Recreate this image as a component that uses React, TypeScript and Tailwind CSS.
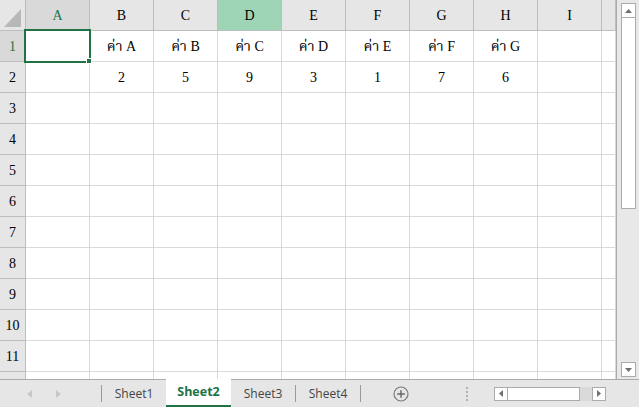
import React from "react";

const cols = ["A", "B", "C", "D", "E", "F", "G", "H", "I", ""];
const rowData: Record<number, string[]> = {
  1: ["", "ค่า A", "ค่า B", "ค่า C", "ค่า D", "ค่า E", "ค่า F", "ค่า G", "", ""],
  2: ["", "2", "5", "9", "3", "1", "7", "6", "", ""],
};
const rows = [1, 2, 3, 4, 5, 6, 7, 8, 9, 10, 11, 12];
const sheets = ["Sheet1", "Sheet2", "Sheet3", "Sheet4"];

const cellFont = { fontFamily: '"Liberation Serif", "Noto Serif Thai", "Noto Sans Thai", "DejaVu Serif", serif' };

function Corner() {
  return (
    <div className="border-r border-b border-[#bdbdbd] bg-[#e6e6e6] relative">
      <svg width="26" height="31" className="absolute left-0 top-0">
        <polygon points="4,27 21,27 21,9" fill="#b8b8b8" />
      </svg>
    </div>
  );
}

function Grid() {
  return (
    <div
      className="grid grid-cols-[26px_repeat(9,64px)_1fr] grid-rows-[repeat(13,31px)] text-[14px] text-black"
      style={cellFont}
    >
      <Corner />
      {cols.map((c, i) => (
        <div
          key={c + i}
          className={
            "flex items-center justify-center border-r border-b border-[#bdbdbd] " +
            (c === "D"
              ? "bg-[#9fd5b7]"
              : c === "A"
              ? "bg-[#d9d9d9] text-[#217346]"
              : "bg-[#e6e6e6]")
          }
        >
          {c}
        </div>
      ))}
      {rows.map((r) => (
        <React.Fragment key={r}>
          <div
            className={
              "flex items-center justify-center border-r border-b border-[#bdbdbd] " +
              (r === 1 ? "bg-[#d9d9d9] text-[#217346]" : "bg-[#e6e6e6]")
            }
          >
            {r}
          </div>
          {cols.map((c, i) => (
            <div
              key={r + "-" + i}
              className="flex items-center justify-center border-r border-b border-[#d9d9d9]"
            >
              {rowData[r]?.[i] ?? ""}
            </div>
          ))}
        </React.Fragment>
      ))}
    </div>
  );
}

function VScroll() {
  return (
    <div className="w-[22px] bg-[#e8e8e8] flex flex-col items-center pt-[3px] pb-[2px] pl-[1px]">
      <div className="w-[15px] h-[15px] bg-white border border-[#ababab] flex items-center justify-center">
        <svg width="7" height="4">
          <polygon points="0,4 7,4 3.5,0" fill="#6f6f6f" />
        </svg>
      </div>
      <div className="w-[15px] h-[191px] bg-white border border-[#ababab] border-t-0" />
      <div className="flex-1" />
      <div className="w-[15px] h-[15px] bg-white border border-[#ababab] flex items-center justify-center">
        <svg width="7" height="4">
          <polygon points="0,0 7,0 3.5,4" fill="#6f6f6f" />
        </svg>
      </div>
    </div>
  );
}

function TabBar() {
  return (
    <div
      className="h-[28px] border-t border-[#ababab] bg-[#e6e6e6] flex items-stretch text-[12px] text-[#444]"
      style={{ fontFamily: '"Open Sans", "Noto Sans", sans-serif' }}
    >
      <div className="w-[101px] flex items-center">
        <svg width="5" height="8" className="ml-[27px]">
          <polygon points="5,0 5,8 0,4" fill="#c6c6c6" />
        </svg>
        <svg width="5" height="8" className="ml-[24px]">
          <polygon points="0,0 0,8 5,4" fill="#c6c6c6" />
        </svg>
      </div>
      <div className="w-px bg-[#9a9a9a] my-[5px]" />
      {sheets.map((s, i) => {
        const active = s === "Sheet2";
        const sepAfter = i >= 2;
        return (
          <React.Fragment key={s}>
            {active ? (
              <div className="w-[65px] -mt-px bg-white border-b-2 border-[#217346] flex items-center justify-center font-bold text-[#217346] text-[12.5px]">
                {s}
              </div>
            ) : (
              <div className="w-[64px] flex items-center justify-center">{s}</div>
            )}
            {sepAfter && <div className="w-px bg-[#9a9a9a] my-[5px]" />}
          </React.Fragment>
        );
      })}
      <div className="w-[80px] flex items-center justify-center">
        <svg width="16" height="16" viewBox="0 0 16 16">
          <circle cx="8" cy="8" r="7" fill="none" stroke="#7a7a7a" strokeWidth="1.2" />
          <path d="M8 4.2v7.6M4.2 8h7.6" stroke="#666" strokeWidth="1.4" />
        </svg>
      </div>
      <div className="w-[50px] flex flex-col items-center justify-center gap-[2px] ml-[1px]">
        <span className="w-[2px] h-[2px] bg-[#b0b0b0]" />
        <span className="w-[2px] h-[2px] bg-[#b0b0b0]" />
        <span className="w-[2px] h-[2px] bg-[#b0b0b0]" />
        <span className="w-[2px] h-[2px] bg-[#b0b0b0]" />
      </div>
      <div className="flex items-center ml-[2px]">
        <div className="w-[14px] h-[14px] bg-white border border-[#ababab] flex items-center justify-center">
          <svg width="4" height="7">
            <polygon points="4,0 4,7 0,3.5" fill="#6f6f6f" />
          </svg>
        </div>
        <div className="w-[72px] h-[14px] bg-white border border-[#ababab] border-l-0" />
        <div className="w-[12px] h-[14px] bg-[#dadada]" />
        <div className="w-[14px] h-[14px] bg-white border border-[#ababab] flex items-center justify-center">
          <svg width="4" height="7">
            <polygon points="0,0 0,7 4,3.5" fill="#6f6f6f" />
          </svg>
        </div>
      </div>
    </div>
  );
}

export default function App() {
  return (
    <div className="w-[639px] h-[407px] flex flex-col bg-white overflow-hidden">
      <div className="flex h-[379px]">
        <div className="relative w-[617px] overflow-hidden border-r border-[#ababab]">
          <Grid />
          <div className="absolute left-[24px] top-[29px] w-[67px] h-[34px] border-2 border-[#217346]" />
          <div className="absolute left-[86px] top-[58px] w-[6px] h-[6px] bg-[#217346] border border-white" />
        </div>
        <VScroll />
      </div>
      <TabBar />
    </div>
  );
}
